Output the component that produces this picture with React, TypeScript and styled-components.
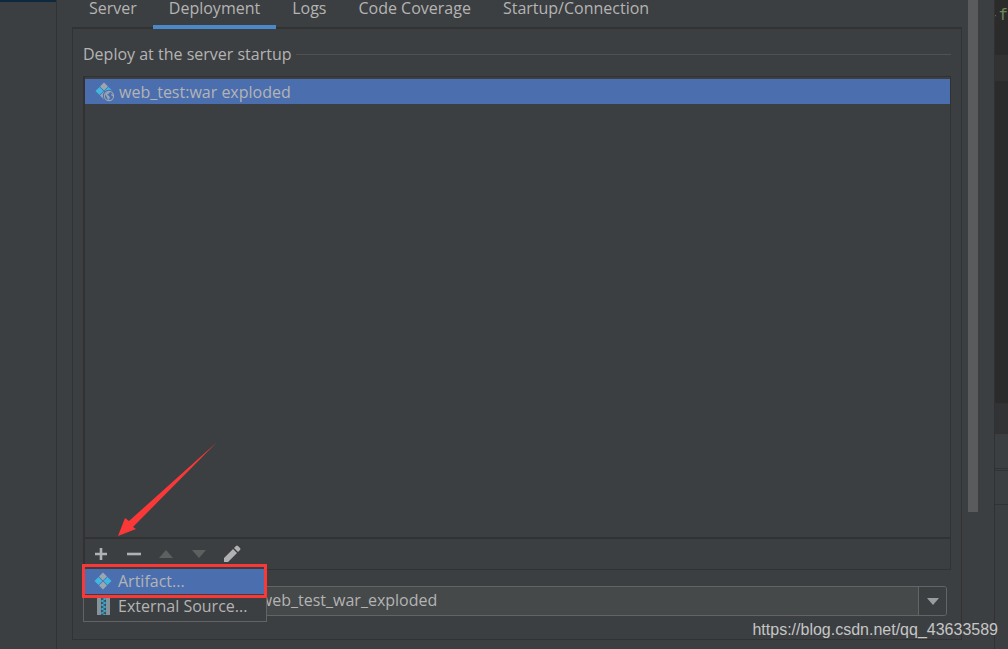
import React from "react";
import styled, { createGlobalStyle, css } from "styled-components";

const Global = createGlobalStyle`
  * { box-sizing: border-box; }
  html, body { margin: 0; background: #3c3f41; overflow: hidden; }
  body, button, input { font-family: "Open Sans", "Noto Sans", sans-serif; font-size: 16px; font-weight: 400; color: #b4b4b4; }
  button { border: 0; padding: 0; background: none; }
`;

const Window = styled.div`
  display: flex;
  height: 100vh;
  overflow: hidden;
  position: relative;
`;

const Sidebar = styled.aside`
  width: 57px;
  flex: none;
  border-right: 1px solid #323232;
`;

const SidebarSelection = styled.div`
  height: 2px;
  background: #0d293e;
`;

const Main = styled.main`
  flex: 1;
  min-width: 0;
  padding: 0 6px 9px 15px;
  display: flex;
  flex-direction: column;
`;

const Tabs = styled.div`
  display: flex;
  height: 29px;
  flex: none;
  padding-left: 1px;
  border-bottom: 2px solid #323232;
`;

const Tab = styled.button<{ $active?: boolean }>`
  height: 29px;
  padding: 0 16px 13px;
  line-height: 16px;
  white-space: nowrap;
  ${(p) => p.$active && css`border-bottom: 4px solid #4a88c7; padding-bottom: 9px;`}
`;

const Panel = styled.section`
  flex: 1;
  min-height: 0;
  display: flex;
  flex-direction: column;
  padding: 15px 10px 23px;
  border: 1px solid #323232;
  border-top: 0;
`;

const Legend = styled.h2`
  display: flex;
  align-items: center;
  gap: 4px;
  height: 20px;
  margin: 0 0 12px;
  font-size: 16px;
  font-weight: 400;
  white-space: nowrap;
  &::after { content: ""; flex: 1; height: 1px; background: #515151; }
`;

const ListBox = styled.div`
  flex: 1;
  min-height: 0;
  display: flex;
  flex-direction: column;
  border: 1px solid #323232;
  border-left-width: 2px;
`;

const List = styled.ul`
  flex: 1;
  margin: 0;
  padding: 2px 0 0;
  list-style: none;
`;

const ListRow = styled.li`
  display: flex;
  align-items: center;
  gap: 4px;
  height: 25px;
  padding-left: 10px;
  background: #4b6eaf;
`;

const Toolbar = styled.div`
  display: flex;
  align-items: center;
  gap: 13px;
  height: 32px;
  padding-left: 6px;
  border-top: 2px solid #323232;
`;

const ToolButton = styled.button`
  display: flex;
  width: 20px;
  height: 20px;
  svg { margin: auto; }
`;

const Combo = styled.div`
  display: flex;
  height: 30px;
  flex: none;
  margin: 16px 4px 0 160px;
  border: 1px solid #646464;
  border-radius: 3px;
  background: #45494a;
  overflow: hidden;
`;

const ComboInput = styled.input`
  flex: 1;
  min-width: 0;
  border: 0;
  outline: 0;
  padding: 0 10px 2px;
  background: transparent;
`;

const ComboButton = styled.button`
  display: flex;
  align-items: center;
  justify-content: center;
  width: 28px;
  border-left: 1px solid #646464;
  background: #3c3f41;
`;

const ScrollTrack = styled.div`
  width: 27px;
  flex: none;
  border-right: 1px solid #2f3133;
`;

const ScrollThumb = styled.div`
  width: 10px;
  height: calc(100% - 137px);
  background: #595b5d;
`;

const Editor = styled.aside`
  width: 13px;
  flex: none;
  display: flex;
  flex-direction: column;
`;

const Code = styled.pre`
  display: flex;
  justify-content: flex-end;
  height: 403px;
  flex: none;
  margin: 0;
  padding: 4px 0 0;
  overflow: hidden;
  background: linear-gradient(#2b2b2b 55px, #323232 55px, #323232 81px, #2b2b2b 81px);
  color: #6a8759;
  font: 16px/22px "DejaVu Sans Mono", monospace;
`;

const EditorBar = styled.div<{ $height: number; $dark?: boolean }>`
  height: ${(p) => p.$height}px;
  flex: none;
  border-top: 1px solid #323232;
  background: ${(p) => (p.$dark ? "#313335" : "#3c3f41")};
`;

const Menu = styled.div`
  position: absolute;
  left: 83px;
  bottom: 27px;
  width: 184px;
  padding: 2px 0;
  border: 1px solid #616365;
  background: #3c3f41;
`;

const MenuItem = styled.button<{ $active?: boolean }>`
  display: flex;
  align-items: center;
  gap: 6px;
  width: 100%;
  height: 25px;
  padding: 0 0 2px 10px;
  white-space: nowrap;
  background: ${(p) => (p.$active ? "#4b6eaf" : "transparent")};
`;

const Highlight = styled.div`
  position: absolute;
  left: 82px;
  bottom: 51px;
  width: 185px;
  height: 34px;
  border: 3px solid #fb3838;
`;

const Arrow = styled.svg`
  position: absolute;
  left: 118px;
  bottom: 113px;
`;

const Watermark = styled.a`
  position: absolute;
  right: 10px;
  bottom: 10px;
  color: #c6c6c6;
  font: 16px/18px "Liberation Sans", Arial, sans-serif;
  text-decoration: none;
`;

const Diamonds = () => (
  <svg width="18" height="18" viewBox="0 0 18 18" aria-hidden="true">
    <path d="M9 .5l4 4-4 4-4-4z" fill="#9aa7b0" />
    <path d="M9 9.500l4 4-4 4-4-4z" fill="#9aa7b0" />
    <path d="M4.500 5l4 4-4 4-4-4z" fill="#40b6e0" />
    <path d="M13.500 5l4 4-4 4-4-4z" fill="#40b6e0" />
  </svg>
);

const ExplodedArtifact = () => (
  <svg width="20" height="20" viewBox="0 0 20 20" aria-hidden="true">
    <path d="M9 .5l4 4-4 4-4-4z" fill="#9aa7b0" />
    <path d="M9 9.500l4 4-4 4-4-4z" fill="#9aa7b0" />
    <path d="M4.500 5l4 4-4 4-4-4z" fill="#40b6e0" />
    <path d="M13.500 5l4 4-4 4-4-4z" fill="#40b6e0" />
    <circle cx="14" cy="14" r="6.200" fill="#4b6eaf" />
    <circle cx="14" cy="14" r="4.600" fill="none" stroke="#9aa7b0" strokeWidth="1.100" />
    <path d="M10 12q2-3 5-2.500l-1 2-2 1 2 1.500 1 1.500-1.500 2.500q-1-1-1.500-2.500zM16 12l2 .5v2l-1.500-1z" fill="#9aa7b0" />
  </svg>
);

const ArchiveIcon = () => (
  <svg width="18" height="18" viewBox="0 0 18 18" aria-hidden="true">
    <path d="M3 0h4v18H3zM12 0h4v18h-4z" fill="#87939a" />
    <path d="M7 0h5v18H7z" fill="#36515d" />
    <path d="M7.500 0l4 2-4 2 4 2-4 2 4 2-4 2 4 2-4 2 4 2" fill="none" stroke="#40a6cc" strokeWidth="1.300" />
  </svg>
);

export default function App() {
  return (
    <>
      <Global />
      <Window>
        <Sidebar><SidebarSelection /></Sidebar>
        <Main>
          <Tabs role="tablist">
            <Tab role="tab">Server</Tab>
            <Tab role="tab" aria-selected $active>Deployment</Tab>
            <Tab role="tab">Logs</Tab>
            <Tab role="tab">Code Coverage</Tab>
            <Tab role="tab">Startup/Connection</Tab>
          </Tabs>
          <Panel>
            <Legend>Deploy at the server startup</Legend>
            <ListBox>
              <List>
                <ListRow><ExplodedArtifact />web_test:war exploded</ListRow>
              </List>
              <Toolbar>
                <ToolButton aria-label="Add">
                  <svg width="14" height="14"><path d="M7 1v12M1 7h12" stroke="#afb1b3" strokeWidth="2.600" /></svg>
                </ToolButton>
                <ToolButton aria-label="Remove">
                  <svg width="14" height="14"><path d="M0 7h14" stroke="#afb1b3" strokeWidth="2.600" /></svg>
                </ToolButton>
                <ToolButton aria-label="Move up">
                  <svg width="16" height="8"><path d="M7 0l7 8H0z" fill="#5e6060" /></svg>
                </ToolButton>
                <ToolButton aria-label="Move down">
                  <svg width="16" height="8"><path d="M0 0h14l-7 8z" fill="#5e6060" /></svg>
                </ToolButton>
                <ToolButton aria-label="Edit">
                  <svg width="18" height="18"><path d="M0 17v-4l9-9 4 4-9 9zM10 3l2-2q1-1 2 0l2 2q1 1 0 2l-2 2z" fill="#afb1b3" /></svg>
                </ToolButton>
              </Toolbar>
            </ListBox>
            <Combo>
              <ComboInput aria-label="Application context" defaultValue="/web_test_war_exploded" />
              <ComboButton aria-label="Show contexts">
                <svg width="12" height="7"><path d="M0 0h12l-6 7z" fill="#9a9da0" /></svg>
              </ComboButton>
            </Combo>
          </Panel>
        </Main>
        <ScrollTrack><ScrollThumb /></ScrollTrack>
        <Editor>
          <Code>-f</Code>
          <EditorBar $height={30} $dark />
          <EditorBar $height={35} />
          <EditorBar $height={2} />
          <EditorBar $height={34} />
          <EditorBar $height={30} />
        </Editor>
        <Menu role="menu">
          <MenuItem role="menuitem" $active><Diamonds />Artifact...</MenuItem>
          <MenuItem role="menuitem"><ArchiveIcon />External Source...</MenuItem>
        </Menu>
        <Highlight />
        <Arrow width="98" height="93" viewBox="0 0 98 93" aria-hidden="true">
          <path d="M98 0L15 84l3 2-18 7 7-18 4 3z" fill="#fb3838" />
        </Arrow>
        <Watermark href="https://blog.csdn.net/qq_43633589">https://blog.csdn.net/qq_43633589</Watermark>
      </Window>
    </>
  );
}
